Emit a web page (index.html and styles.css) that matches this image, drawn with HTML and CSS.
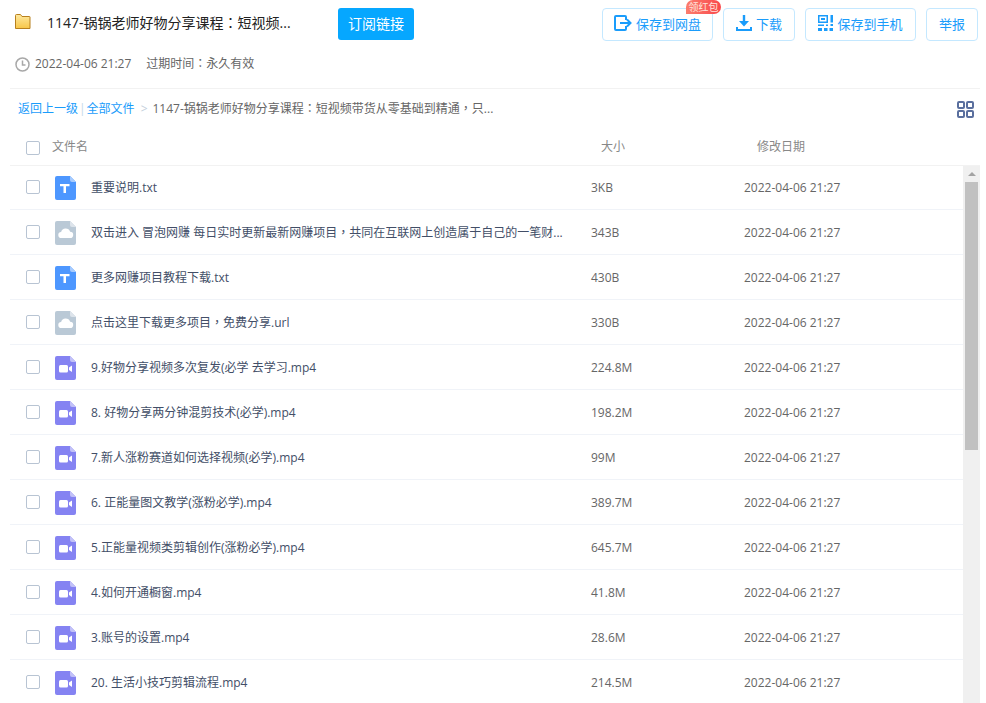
FILE: index.html
```html
<!DOCTYPE html>
<html lang="en">
<head>
    <meta charset="UTF-8">
    <meta name="viewport" content="width=device-width, initial-scale=1.0">
    <title>1147-锅锅老师好物分享课程</title>
    <link rel="stylesheet" href="styles.css">
</head>
<body>
    <svg class="defs" width="0" height="0">
        <defs>
            <linearGradient id="folder-fill" x1="0" y1="0" x2="0" y2="1">
                <stop offset="0" stop-color="#fee9a0"/>
                <stop offset="1" stop-color="#f8c648"/>
            </linearGradient>
        </defs>
        <symbol id="file-txt" viewBox="0 0 21 24">
            <path d="M2 0h13l6 6v16a2 2 0 0 1-2 2H2a2 2 0 0 1-2-2V2a2 2 0 0 1 2-2z" fill="#4d97ff"/>
            <path d="M15 0l6 6h-4a2 2 0 0 1-2-2z" fill="#a6cbff"/>
            <path d="M5 8h9.500v2.200H11v6.800H8.500v-6.800H5z" fill="#fff"/>
        </symbol>
        <symbol id="file-cloud" viewBox="0 0 21 24">
            <path d="M2 0h13l6 6v16a2 2 0 0 1-2 2H2a2 2 0 0 1-2-2V2a2 2 0 0 1 2-2z" fill="#bac9d6"/>
            <path d="M15 0l6 6h-4a2 2 0 0 1-2-2z" fill="#dde4eb"/>
            <path d="M6.500 17a3 3 0 0 1-.4-6 4.700 4.700 0 0 1 9-.3 3.100 3.100 0 0 1-.1 6.300z" fill="#fff"/>
        </symbol>
        <symbol id="file-video" viewBox="0 0 21 24">
            <path d="M2 0h13l6 6v16a2 2 0 0 1-2 2H2a2 2 0 0 1-2-2V2a2 2 0 0 1 2-2z" fill="#8583f2"/>
            <path d="M15 0l6 6h-4a2 2 0 0 1-2-2z" fill="#c2c1f8"/>
            <rect x="4" y="9" width="9" height="7.500" rx="1.500" fill="#fff"/>
            <path d="M14 11.500l3-2v6.500l-3-2z" fill="#fff"/>
        </symbol>
    </svg>

    <div class="header">
        <div class="title-row">
            <svg class="folder" width="16" height="15" viewBox="0 0 16 15">
                <path d="M.5 14.500v-13a1 1 0 0 1 1-1h4l1.500 2h7.500a.5.5 0 0 1 .5.5v11.500z" fill="url(#folder-fill)" stroke="#b8801e"/>
            </svg>
            <h1 class="title">1147-锅锅老师好物分享课程<span class="punct">：</span>短视频...</h1>
            <button class="subscribe">订阅链接</button>
            <div class="actions">
                <button class="action save-disk">
                    <span class="badge">领红包</span>
                    <svg width="18" height="16" viewBox="0 0 18 16" fill="none" stroke="#1a9cfb" stroke-width="2">
                        <path d="M12 5V2a1 1 0 0 0-1-1H2a1 1 0 0 0-1 1v12a1 1 0 0 0 1 1h9a1 1 0 0 0 1-1v-3"/>
                        <path d="M6 8h10.500M13 4.500L16.500 8 13 11.500"/>
                    </svg>
                    保存到网盘
                </button>
                <button class="action download">
                    <svg width="16" height="16" viewBox="0 0 16 16" fill="#1a9cfb">
                        <path d="M6.800 0h2.400v6H13l-5 5.500L3 6h3.800z"/>
                        <path d="M0 12h2v2h12v-2h2v4H0z"/>
                    </svg>
                    下载
                </button>
                <button class="action save-phone">
                    <svg width="15" height="16" viewBox="0 0 15 16" fill="#1a9cfb">
                        <path d="M0 0h10v8H0zM1.500 1.500v5h7v-5z"/>
                        <path d="M3 3h4v2H3zM0 9.500h6V11H0zM8 9.500h2V11H8zM12.500 0h2.500v7.500h-2.500zM12.500 9h2.500v2h-2.500zM0 13h4v3H0zM6 13h3.500v3H6zM11.500 13H15v3h-3.500z"/>
                    </svg>
                    保存到手机
                </button>
                <button class="action report">举报</button>
            </div>
        </div>
        <div class="meta">
            <svg width="15" height="15" viewBox="0 0 15 15" fill="none" stroke="#a8a8a8" stroke-width="1.500">
                <circle cx="7.500" cy="7.500" r="6.500"/>
                <path d="M7.500 3.500v4.500h3"/>
            </svg>
            <span>2022-04-06 21:27</span>
            <span class="expire">过期时间<span class="punct">：</span>永久有效</span>
        </div>
    </div>

    <div class="crumbs">
        <a class="link">返回上一级</a>
        <span class="sep">|</span>
        <a class="link">全部文件</a>
        <span class="arrow">&gt;</span>
        <span class="path">1147-锅锅老师好物分享课程<span class="punct">：</span>短视频带货从零基础到精通<span class="punct">，</span>只...</span>
        <svg class="grid-toggle" width="17" height="17" viewBox="0 0 17 17" fill="none" stroke="#5a6f9e" stroke-width="2">
            <rect x="1" y="1" width="6" height="6" rx="1"/>
            <rect x="10" y="1" width="6" height="6" rx="1"/>
            <rect x="1" y="10" width="6" height="6" rx="1"/>
            <rect x="10" y="10" width="6" height="6" rx="1"/>
        </svg>
    </div>

    <div class="table-head">
        <span class="check"></span>
        <span class="col-name">文件名</span>
        <span class="col-size">大小</span>
        <span class="col-date">修改日期</span>
    </div>

    <div class="table-body">
        <div class="rows">
            <div class="row"><span class="check"></span><svg class="file-icon"><use href="#file-txt"/></svg><span class="name">重要说明.txt</span><span class="size">3KB</span><span class="date">2022-04-06 21:27</span></div>
            <div class="row"><span class="check"></span><svg class="file-icon"><use href="#file-cloud"/></svg><span class="name">双击进入 冒泡网赚 每日实时更新最新网赚项目<span class="punct">，</span>共同在互联网上创造属于自己的一笔财...</span><span class="size">343B</span><span class="date">2022-04-06 21:27</span></div>
            <div class="row"><span class="check"></span><svg class="file-icon"><use href="#file-txt"/></svg><span class="name">更多网赚项目教程下载.txt</span><span class="size">430B</span><span class="date">2022-04-06 21:27</span></div>
            <div class="row"><span class="check"></span><svg class="file-icon"><use href="#file-cloud"/></svg><span class="name">点击这里下载更多项目<span class="punct">，</span>免费分享.url</span><span class="size">330B</span><span class="date">2022-04-06 21:27</span></div>
            <div class="row"><span class="check"></span><svg class="file-icon"><use href="#file-video"/></svg><span class="name">9.好物分享视频多次复发(必学 去学习.mp4</span><span class="size">224.8M</span><span class="date">2022-04-06 21:27</span></div>
            <div class="row"><span class="check"></span><svg class="file-icon"><use href="#file-video"/></svg><span class="name">8. 好物分享两分钟混剪技术(必学).mp4</span><span class="size">198.2M</span><span class="date">2022-04-06 21:27</span></div>
            <div class="row"><span class="check"></span><svg class="file-icon"><use href="#file-video"/></svg><span class="name">7.新人涨粉赛道如何选择视频(必学).mp4</span><span class="size">99M</span><span class="date">2022-04-06 21:27</span></div>
            <div class="row"><span class="check"></span><svg class="file-icon"><use href="#file-video"/></svg><span class="name">6. 正能量图文教学(涨粉必学).mp4</span><span class="size">389.7M</span><span class="date">2022-04-06 21:27</span></div>
            <div class="row"><span class="check"></span><svg class="file-icon"><use href="#file-video"/></svg><span class="name">5.正能量视频类剪辑创作(涨粉必学).mp4</span><span class="size">645.7M</span><span class="date">2022-04-06 21:27</span></div>
            <div class="row"><span class="check"></span><svg class="file-icon"><use href="#file-video"/></svg><span class="name">4.如何开通橱窗.mp4</span><span class="size">41.8M</span><span class="date">2022-04-06 21:27</span></div>
            <div class="row"><span class="check"></span><svg class="file-icon"><use href="#file-video"/></svg><span class="name">3.账号的设置.mp4</span><span class="size">28.6M</span><span class="date">2022-04-06 21:27</span></div>
            <div class="row"><span class="check"></span><svg class="file-icon"><use href="#file-video"/></svg><span class="name">20. 生活小技巧剪辑流程.mp4</span><span class="size">214.5M</span><span class="date">2022-04-06 21:27</span></div>
        </div>
        <div class="scrollbar">
            <div class="scroll-up"></div>
            <div class="scroll-thumb"></div>
        </div>
    </div>
</body>
</html>
```

FILE: styles.css
```css
html, body {
    height: 100%;
    overflow: hidden;
}

body {
    margin: 0;
    padding: 0 6px 0 10px;
    background-color: #fff;
    color: #424e67;
    font-family: "Open Sans", "Noto Sans CJK SC", sans-serif;
    font-size: 12px;
}

.defs {
    position: absolute;
}

button {
    font-family: inherit;
}

/* fullwidth colon and comma sit in the middle of the box in the reference */
.punct {
    font-family: "Noto Sans CJK TC", sans-serif;
}

.header {
    height: 89px;
    box-sizing: border-box;
    padding-top: 8px;
    border-bottom: 1px solid #f2f2f2;
}

.title-row {
    display: flex;
    align-items: center;
    height: 33px;
    padding-left: 5px;
}

.folder {
    margin-top: -6px;
}

.title {
    width: 291px;
    margin: -5px 0 0 16px;
    color: #222;
    font-size: 14px;
    font-weight: normal;
    white-space: nowrap;
}

.subscribe {
    align-self: flex-start;
    width: 76px;
    height: 32px;
    padding: 0 0 2px;
    border: none;
    border-radius: 3px;
    background-color: #06a7ff;
    color: #fff;
    font-size: 14px;
}

.actions {
    display: flex;
    margin-left: auto;
    margin-right: 2px;
    gap: 10px;
}

.action {
    position: relative;
    display: flex;
    align-items: center;
    justify-content: center;
    height: 33px;
    padding: 0 0 3px;
    border: 1px solid #c4e8ff;
    border-radius: 4px;
    background-color: #fff;
    color: #1a9cfb;
    font-size: 13px;
}

.action svg {
    margin-right: 4px;
}

.save-disk {
    width: 111px;
}

.download {
    width: 72px;
}

.save-phone {
    width: 111px;
}

.report {
    width: 52px;
}

.badge {
    position: absolute;
    top: -9px;
    right: -9px;
    width: 35px;
    height: 14px;
    line-height: 14px;
    border-radius: 7px 7px 7px 0;
    background: linear-gradient(90deg, #fb7d6e, #f9484c);
    color: #ffe3dc;
    font-size: 10px;
    text-align: center;
}

.meta {
    display: flex;
    align-items: center;
    height: 16px;
    margin-top: 14px;
    padding-left: 5px;
    color: #666;
}

.meta svg {
    margin-top: 2px;
    margin-right: 5px;
}

.expire {
    margin-left: 15px;
}

.crumbs {
    display: flex;
    align-items: center;
    height: 38px;
    padding-left: 8px;
    padding-right: 6px;
    color: #666;
}

.link {
    color: #1a9cfb;
}

.sep {
    margin: 0 1px;
    color: #c4d8e8;
}

.arrow {
    margin: 0 5px 0 6px;
    color: #c4d0dc;
}

.grid-toggle {
    margin-left: auto;
    margin-top: 3px;
}

.table-head {
    display: flex;
    align-items: center;
    height: 39px;
    box-sizing: border-box;
    border-bottom: 1px solid #f2f2f2;
    color: #888;
}

.check {
    flex: none;
    width: 12px;
    height: 12px;
    margin-left: 16px;
    margin-top: -2px;
    border: 1px solid #b8c4d3;
    border-radius: 2px;
}

.table-head .check {
    margin-top: 4px;
}

.col-name {
    width: 549px;
    margin-left: 12px;
}

.col-size {
    width: 156px;
}

.table-body {
    display: flex;
}

.rows {
    flex: 1;
}

.row {
    display: flex;
    align-items: center;
    height: 45px;
    box-sizing: border-box;
    padding-top: 2px;
    border-bottom: 1px solid #f0f3f8;
    color: #424e67;
}

.row:first-child {
    height: 44px;
    padding-top: 1px;
}

.file-icon {
    flex: none;
    width: 21px;
    height: 24px;
    margin-left: 15px;
}

.name {
    width: 500px;
    margin-top: -2px;
    margin-left: 15px;
    white-space: nowrap;
}

.size {
    width: 153px;
    margin-top: -2px;
    color: #666;
}

.date {
    margin-top: -2px;
    color: #666;
}

.scrollbar {
    flex: none;
    width: 17px;
    height: 540px;
    background-color: #f0f0f0;
}

.scroll-up {
    width: 0;
    height: 0;
    margin: 6px auto 0;
    border: 4px solid transparent;
    border-top: none;
    border-bottom-color: #a3a3a3;
}

.scroll-thumb {
    height: 268px;
    margin: 6px 2px 0;
    background-color: #c1c1c1;
}
```
